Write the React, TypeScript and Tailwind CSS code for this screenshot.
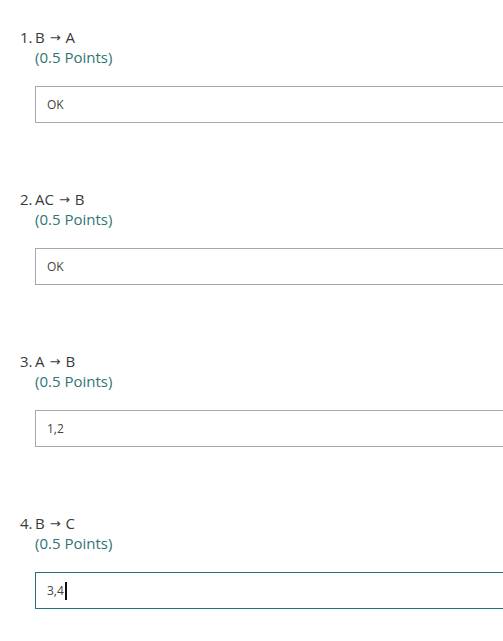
import React from 'react';

const questions = [
  { n: '1.', a: 'B', b: 'A', value: 'OK' },
  { n: '2.', a: 'AC', b: 'B', value: 'OK' },
  { n: '3.', a: 'A', b: 'B', value: '1,2' },
  { n: '4.', a: 'B', b: 'C', value: '3,4', focused: true },
];

const App: React.FC = () => {
  return (
    <div
      className="w-[503px] h-[641px] overflow-hidden bg-white pl-[20px] pt-[27px]"
      style={{ fontFamily: '"Open Sans", "Noto Sans", sans-serif' }}
    >
      {questions.map((q) => (
        <div key={q.n} className="h-[162px]">
          <div className="flex items-center h-[20px] text-[15px] leading-[20px] text-[#3a3a3a]">
            <span className="w-[15px]">{q.n}</span>
            <span>{q.a}</span>
            <span
              className="mx-[5px] text-[13px] leading-none"
              style={{ fontFamily: '"DejaVu Sans", sans-serif' }}
            >
              →
            </span>
            <span>{q.b}</span>
          </div>
          <div className="pl-[15px] text-[15px] leading-[20px] text-[#2f7474]">(0.5 Points)</div>
          <div
            className={
              'mt-[19px] ml-[15px] w-[500px] h-[37px] flex items-center pl-[11px] text-[12px] text-[#444444] ' +
              (q.focused ? 'border border-[#217479]' : 'border border-[#a8a8a8]')
            }
          >
            <span>{q.value}</span>
            {q.focused && <span className="ml-px w-[2px] h-[18px] bg-[#111111]" />}
          </div>
        </div>
      ))}
    </div>
  );
};

export default App;
